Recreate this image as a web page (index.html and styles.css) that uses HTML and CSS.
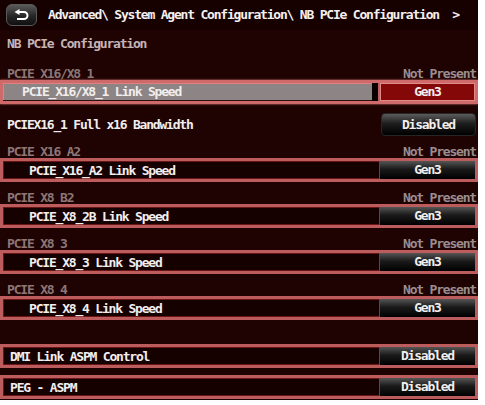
FILE: index.html
```html
<!DOCTYPE html>
<html>
  <head>
    <title>NB PCIe Configuration</title>
    <link rel="stylesheet" href="styles.css">
  </head>
  <body>
    <div class="screen">
      <div class="header">
        <button class="back">
          <svg width="16" height="12" viewBox="0 0 16 12">
            <path d="M5 3 H10 A3.5 3.5 0 0 1 10 10 H3" fill="none" stroke="#fff" stroke-width="2"/>
            <polygon points="0.5,3 5.5,0 5.5,6" fill="#fff"/>
          </svg>
        </button>
        <span class="path">Advanced\ System Agent Configuration\ NB PCIe Configuration&nbsp;&nbsp;&gt;</span>
      </div>

      <div class="section-title">NB PCIe Configuration</div>

      <!-- PCIE slot groups -->
      <div class="group-label"><span>PCIE_X16/X8_1</span><span class="status">Not Present</span></div>
      <div class="item framed selected">
        <span class="name indent">PCIE_X16/X8_1 Link Speed</span>
        <span class="caret"></span>
        <span class="value">Gen3</span>
      </div>

      <div class="item plain">
        <span class="name">PCIEX16_1 Full x16 Bandwidth</span>
        <span class="value rounded">Disabled</span>
      </div>

      <div class="group-label"><span>PCIE_X16_A2</span><span class="status">Not Present</span></div>
      <div class="item framed">
        <span class="name indent">PCIE_X16_A2 Link Speed</span>
        <span class="value">Gen3</span>
      </div>

      <div class="group-label"><span>PCIE_X8_B2</span><span class="status">Not Present</span></div>
      <div class="item framed">
        <span class="name indent">PCIE_X8_2B Link Speed</span>
        <span class="value">Gen3</span>
      </div>

      <div class="group-label"><span>PCIE_X8_3</span><span class="status">Not Present</span></div>
      <div class="item framed">
        <span class="name indent">PCIE_X8_3 Link Speed</span>
        <span class="value">Gen3</span>
      </div>

      <div class="group-label"><span>PCIE_X8_4</span><span class="status">Not Present</span></div>
      <div class="item framed">
        <span class="name indent">PCIE_X8_4 Link Speed</span>
        <span class="value">Gen3</span>
      </div>

      <div class="item framed dmi">
        <span class="name">DMI Link ASPM Control</span>
        <span class="value">Disabled</span>
      </div>

      <div class="item framed peg">
        <span class="name">PEG - ASPM</span>
        <span class="value">Disabled</span>
      </div>
    </div>
  </body>
</html>
```

FILE: styles.css
```css
body {
  margin: 0;
  background: #fff;
}

.screen {
  width: 478px;
  height: 400px;
  overflow: hidden;
  background: #1f0303;
  font-family: "DejaVu Sans Mono", monospace;
  font-weight: bold;
  font-size: 13px;
  letter-spacing: -1.2px;
  color: #f2eeee;
}

/* Header */
.header {
  display: flex;
  align-items: center;
  gap: 11px;
  height: 30px;
  padding-left: 6px;
  background: #170000;
}

.back {
  display: flex;
  align-items: center;
  justify-content: center;
  width: 31px;
  height: 22px;
  padding: 0;
  border: 1px solid #5a5a5a;
  border-radius: 6px;
  background: linear-gradient(#5a5a5a, #262626 55%, #101010);
}

.path {
  color: #f4f0f0;
  line-height: 14px;
}

.section-title {
  height: 28px;
  line-height: 28px;
  padding-left: 7px;
  color: #c6b4b4;
}

/* Slot label line */
.group-label {
  display: flex;
  justify-content: space-between;
  height: 22px;
  padding: 9px 2px 0 7px;
  box-sizing: border-box;
  line-height: 13px;
  overflow: hidden;
  color: #8c7676;
}

.group-label .status {
  color: #9c8c8c;
}

/* Items */
.item {
  display: flex;
  align-items: center;
  box-sizing: border-box;
}

.name {
  flex: 1;
  line-height: 15px;
}

.name.indent {
  padding-left: 19px;
}

.framed {
  height: 24px;
  border: 3px solid #bd5c5c;
  box-shadow: inset 0 0 0 1px #6a1616;
  padding-left: 7px;
  background: #160101;
}

.framed .value {
  width: 95px;
  height: 18px;
  line-height: 18px;
  text-align: center;
  background: linear-gradient(#555, #1a1a1a 45%, #000);
  border-left: 1px solid #7a3a3a;
}

.selected {
  border-color: #cf6a6a;
  box-shadow: 0 0 2px #e07878, inset 0 0 0 1px #e08080;
  padding-left: 0;
  background: #8d8585;
}

.selected .name {
  align-self: stretch;
  display: flex;
  align-items: center;
  border-bottom: 1px solid #2a1010;
}

.selected .caret {
  width: 6px;
  height: 18px;
  background: #0a0000;
  border-right: 2px solid #c06060;
}

.selected .value {
  width: 93px;
  background: #850808;
  border: 1px solid #e08a8a;
  height: 16px;
  line-height: 16px;
}

.plain {
  height: 32px;
  padding: 9px 2px 0 7px;
}

.plain .value {
  width: 93px;
  height: 21px;
  line-height: 21px;
  text-align: center;
  border: 1px solid #262626;
  border-radius: 4px;
  background: linear-gradient(#5c5c5c, #1e1e1e 45%, #000);
}

.dmi {
  margin-top: 24px;
}

.peg {
  margin-top: 7px;
}
```
